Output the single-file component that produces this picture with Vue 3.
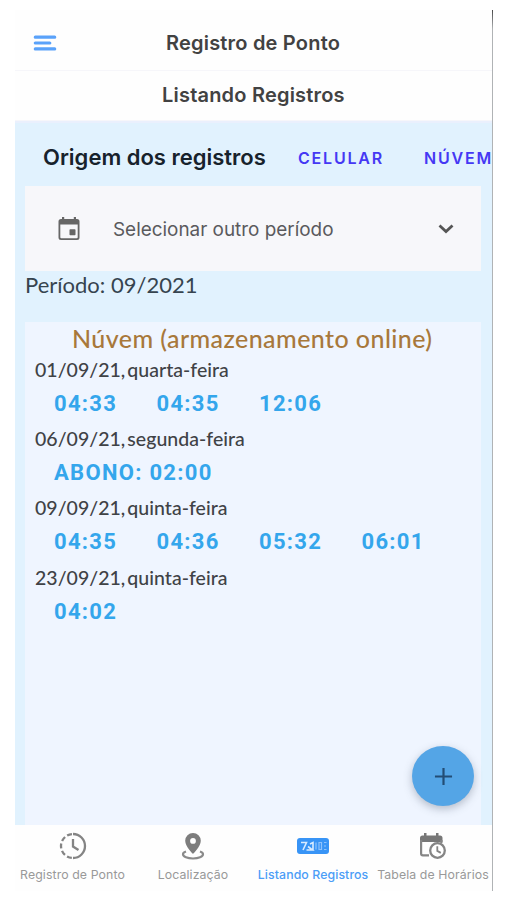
<script setup>
const days = [
  { date: '01/09/21, quarta-feira', entries: ['04:33', '04:35', '12:06'] },
  { date: '06/09/21, segunda-feira', entries: ['ABONO: 02:00'] },
  { date: '09/09/21, quinta-feira', entries: ['04:35', '04:36', '05:32', '06:01'] },
  { date: '23/09/21, quinta-feira', entries: ['04:02'] },
]
</script>

<template>
  <div class="phone">
    <header class="bar top">
      <svg class="menu" viewBox="0 0 24 18" fill="none" stroke="#5aa2fa" stroke-width="3.2" stroke-linecap="round">
        <path d="M2.3 3.2H21.7M2.3 9H16.8M2.3 14.9H21.7" />
      </svg>
      <h1 class="title t1">Registro de Ponto</h1>
    </header>
    <div class="bar sub"><h2 class="title t2">Listando Registros</h2></div>
    <main class="content">
      <div class="origin">
        <strong class="origin-label">Origem dos registros</strong>
        <span class="link celular">CELULAR</span>
        <span class="link nuvem">NÚVEM</span>
      </div>
      <div class="select">
        <svg class="cal" viewBox="0 0 24 24">
          <path fill="#666" fill-rule="evenodd" d="M5 0.5h2.2v2h9.6v-2H19v2h1a2.5 2.5 0 0 1 2.5 2.5v16A2.5 2.5 0 0 1 20 23.500H4A2.500 2.500 0 0 1 1.500 21V5A2.500 2.500 0 0 1 4 2.500h1zM3.300 8v12.700a1 1 0 0 0 1 1h15.400a1 1 0 0 0 1-1V8z" />
          <rect x="12.500" y="12.700" width="6" height="6" rx=".7" fill="#666" />
        </svg>
        <span class="select-label">Selecionar outro período</span>
        <svg class="chevron" viewBox="0 0 16 10" fill="none" stroke="#555" stroke-width="2.8">
          <path d="M1.500 1.500L8 7.500l6.500-6" />
        </svg>
      </div>
      <p class="period">Período: 09/2021</p>
      <section class="records">
        <h3 class="source">Núvem (armazenamento online)</h3>
        <div v-for="day in days" :key="day.date" class="day">
          <p class="date">{{ day.date }}</p>
          <div class="times">
            <span v-for="entry in day.entries" :key="entry" class="time">{{ entry }}</span>
          </div>
        </div>
      </section>
      <button class="fab" aria-label="+">
        <svg viewBox="0 0 20 20" stroke="#234d75" stroke-width="2.300"><path d="M10 1v18M1 10h18" /></svg>
      </button>
    </main>
    <nav class="tabs">
      <div class="tab tab1">
        <svg viewBox="0 0 28 28" fill="none" stroke="#848484" stroke-width="2.300">
          <path d="M14 2A12 12 0 0 1 14 26" />
          <path d="M14 26A12 12 0 0 1 14 2" stroke-dasharray="5 2.540" stroke-dashoffset="-1.200" />
          <path d="M14 7v7.500l5.500 3.500" />
        </svg>
        <span>Registro de Ponto</span>
      </div>
      <div class="tab tab2">
        <svg viewBox="0 0 28 28">
          <path fill="#7d7d7d" fill-rule="evenodd" d="M14 1a7.800 7.800 0 0 0-7.800 7.800C6.200 14.500 14 22 14 22s7.800-7.500 7.800-13.200A7.800 7.800 0 0 0 14 1zm0 5a2.900 2.900 0 1 1 0 5.800 2.900 2.900 0 0 1 0-5.800z" />
          <path d="M7 19.500c-2 .7-3 1.600-3 2.700 0 2.600 4.500 4.300 10 4.300s10-1.700 10-4.300c0-1.100-1-2-3-2.700" fill="none" stroke="#8a8a8a" stroke-width="2.200" />
        </svg>
        <span>Localização</span>
      </div>
      <div class="tab tab3 active">
        <svg viewBox="0 0 32 28">
          <rect x="0" y="6" width="32" height="16" rx="3" fill="#3894f6" />
          <g fill="none" stroke="#d9ebff" stroke-width="1.600">
            <path d="M4 10.500h5.500L6 18M9.500 18h6l-4.500-3.500M13 12l3-1.500V18" />
            <path d="M19 10.500v7M22 10.500h2.500v7H22zM27 10.500h2.500M27 14h2M27 17.500h2.500" stroke="#8fc3fc" stroke-width="1.200" />
          </g>
        </svg>
        <span>Listando Registros</span>
      </div>
      <div class="tab tab4">
        <svg viewBox="0 0 28 28">
          <path fill="#777" d="M5 1h2.500v2.500H17V1h2.500v2.500H21A2.500 2.500 0 0 1 23.500 6v4H1V6a2.500 2.500 0 0 1 2.500-2.500H5z" />
          <path d="M2.100 8v13.500A1.800 1.800 0 0 0 3.900 23.300H10M22.400 8v3" fill="none" stroke="#858585" stroke-width="2.200" />
          <circle cx="18.500" cy="18.500" r="7.300" fill="#fff" stroke="#858585" stroke-width="2.300" />
          <path d="M18.300 14.200v4.700l3.500 2" fill="none" stroke="#858585" stroke-width="1.800" />
        </svg>
        <span>Tabela de Horários</span>
      </div>
    </nav>
  </div>
</template>

<style>
body { margin: 0; background: #fff; }
</style>

<style scoped>
* { box-sizing: border-box; margin: 0; }
.phone {
  width: 478px;
  height: 881px;
  margin: 10px 0 9px 15px;
  display: flex;
  flex-direction: column;
  font-family: Inter, "Liberation Sans", sans-serif;
  background: #fefefe;
  border-right: 1px solid #a9adb0;
  border-image: linear-gradient(#444, #b0b3b5 20px, #b0b3b5) 1;
  border-width: 0 1px 0 0;
}
.bar { display: flex; align-items: center; border-bottom: 1px solid #f6f6fa; }
.top { height: 61px; padding: 6px 0 0 18px; }
.menu { width: 24px; height: 18px; }
.title { font-weight: 600; color: #424242; white-space: nowrap; font-size: 20px; line-height: 24px; }
.t1 { margin-left: 109px; letter-spacing: .2px; }
.sub { height: 50px; padding: 0 0 1px 147px; }
.t2 { letter-spacing: .2px; }
.content { position: relative; height: 704px; padding: 0 11px 0 10px; background: #e1f2fe; border-top: 2px solid #eaf0fd; display: flex; flex-direction: column; }
.origin { height: 63px; display: flex; align-items: center; padding: 5px 0 0 18px; white-space: nowrap; margin-right: -11px; overflow: hidden; }
.origin-label { font-size: 22px; font-weight: 600; color: #17222c; width: 255px; flex: none; }
.link { font-size: 16px; font-weight: 600; color: #4538f4; letter-spacing: 1.800px; flex: none; padding-top: 1px; }
.celular { width: 126px; }
.select { height: 85px; background: #f7f7fa; display: flex; align-items: center; padding: 0 27px 0 32px; }
.cal { width: 24px; height: 25px; }
.select-label { font-size: 18.900px; color: #5a5a5d; margin-left: 32px; padding-top: 2px; white-space: nowrap; flex: 1; }
.chevron { width: 16px; height: 10px; }
.period { font: 400 22px/28px Lato, sans-serif; color: #36444f; height: 51px; }
.records { flex: 1; background: #eff5ff; padding: 2px 0 0 10px; }
.source { font: 500 25px/28px Lato, sans-serif; color: #a8783b; padding-left: 37px; letter-spacing: .43px; white-space: nowrap; margin-bottom: 1px; }
.day { height: 69.200px; }
.date { font: 500 19.500px/34px Lato, sans-serif; color: #3f4246; word-spacing: -3px; letter-spacing: .03px; }
.times { display: flex; padding-left: 19px; }
.time { font: 700 22px/34px Roboto, sans-serif; color: #34a6ec; letter-spacing: 1.300px; margin-right: 39.300px; white-space: nowrap; }
.fab { position: absolute; right: 18px; bottom: 19px; width: 62px; height: 60px; border: 0; border-radius: 50%; background: #54a5e6; display: grid; place-items: center; padding: 0; box-shadow: 0 3px 8px rgba(70, 80, 100, .35); }
.fab svg { width: 19px; height: 19px; }
.tabs { flex: 1; display: grid; grid-template-columns: 115px 126px 114px 126px; }
.tab { display: flex; flex-direction: column; align-items: center; padding-top: 7px; color: #999; font-size: 12.300px; line-height: 16px; letter-spacing: .1px; white-space: nowrap; }
.tab svg { width: 28px; height: 28px; margin-bottom: 7px; }
.tab3 svg { width: 32px; }
.active { color: #4b9df7; font-weight: 500; }
</style>
